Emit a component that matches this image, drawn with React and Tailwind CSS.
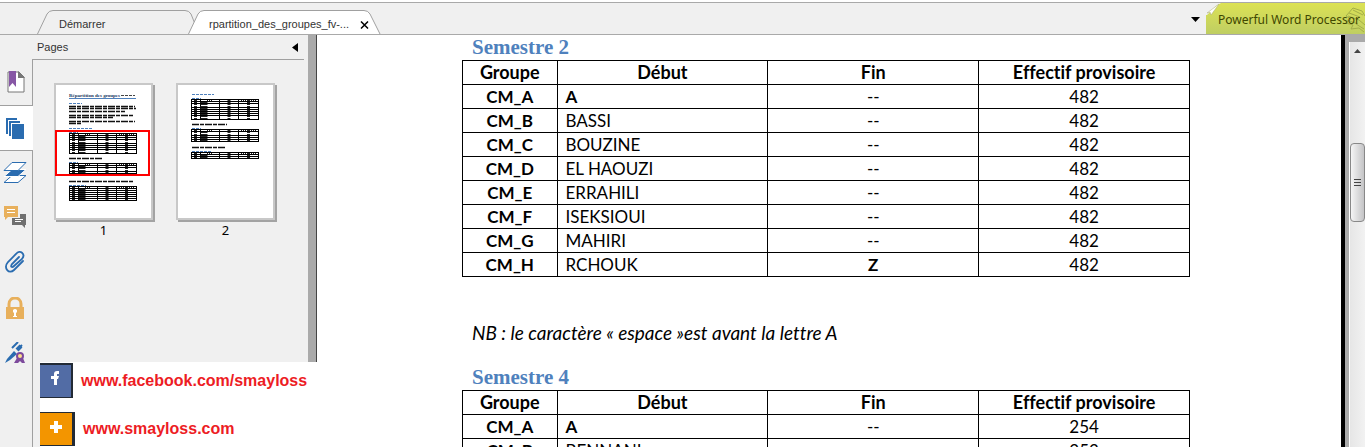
const semestre2 = [
  { groupe: "CM_A", debut: "A", fin: "--", effectif: 482 },
  { groupe: "CM_B", debut: "BASSI", fin: "--", effectif: 482 },
  { groupe: "CM_C", debut: "BOUZINE", fin: "--", effectif: 482 },
  { groupe: "CM_D", debut: "EL HAOUZI", fin: "--", effectif: 482 },
  { groupe: "CM_E", debut: "ERRAHILI", fin: "--", effectif: 482 },
  { groupe: "CM_F", debut: "ISEKSIOUI", fin: "--", effectif: 482 },
  { groupe: "CM_G", debut: "MAHIRI", fin: "--", effectif: 482 },
  { groupe: "CM_H", debut: "RCHOUK", fin: "Z", effectif: 482 },
];

const semestre4 = [
  { groupe: "CM_A", debut: "A", fin: "--", effectif: 254 },
  { groupe: "CM_B", debut: "BENNANI", fin: "--", effectif: 253 },
];

function TabBar() {
  return (
    <header className="flex h-[35px] shrink-0 flex-col border-b border-[#a9a9a9] bg-[#f0f0f0]">
      <div className="h-[3px] shrink-0 border-b border-[#a9a9a9] bg-white" />
      <div className="flex flex-1 items-end">
        <div className="relative ml-[37px] h-6 w-[344px] shrink-0 text-[11px] text-[#333]">
          <svg className="absolute inset-0" width="344" height="24" fill="#f0f0f0" stroke="#a0a0a0">
            <path d="M.5 24 10 4Q12 .5 16 .5H148Q152 .5 154 4L162 24" />
            <path d="M151.500 24 161 4Q163 .5 167 .5H327Q331 .5 333 4L343 24" fill="#fff" />
          </svg>
          <div className="relative flex h-full items-center">
            <button className="w-[150px] pt-1 pl-[22px] text-left">Démarrer</button>
            <button className="w-[165px] pt-1 pl-[22px] text-left">rpartition_des_groupes_fv-...</button>
            <button aria-label="Fermer" className="pt-1.5 pl-2">
              <svg width="9" height="8" stroke="#000" strokeWidth="1.500">
                <path d="M1 .5 8 7.500M8 .5 1 7.500" />
              </svg>
            </button>
          </div>
        </div>
        <button aria-label="Onglets" className="mr-1.5 ml-auto self-center pt-0.5">
          <svg width="9" height="5">
            <path d="M0 0H9L4.500 5Z" />
          </svg>
        </button>
        <a
          href="#word"
          className="relative flex h-[31px] w-[159px] shrink-0 items-center overflow-hidden bg-linear-to-b from-[#dce254] to-[#bfce62] pt-0.5 pl-3 font-['Noto_Sans',sans-serif] text-xs whitespace-nowrap text-[#3f4700]"
        >
          <svg className="absolute top-0 left-0" width="15" height="12">
            <path d="M0 0H15L10 3 1 12H0Z" fill="#f0f0f0" />
            <path d="M13 1 5 12 4 9 1 10Z" fill="#fff" stroke="#aaad75" strokeWidth=".5" />
          </svg>
          <svg className="absolute top-1 right-0" width="20" height="26" fill="none" stroke="#a3ae48">
            <path d="M1 9 8 1 17 4 20 9M4 6 15 10M3 9 14 13M2 13 13 17M8 3 18 8M1 9 6 12 1 16 8 18 6 22 14 21 19 25M14 13 20 18M11 17 19 22" />
          </svg>
          <span className="relative">Powerful Word Processor</span>
        </a>
      </div>
    </header>
  );
}

function SideNav() {
  return (
    <nav className="flex w-[33px] shrink-0 flex-col text-[#2a6cb0]">
      <div className="h-6 shrink-0" />
      <button aria-label="Signets" className="flex h-[46px] shrink-0 items-center justify-center border-r border-[#a0a0a0]">
        <svg width="18" height="22">
          <path d="M1 1H12L17 6V21H1Z" fill="#fff" stroke="#777" />
          <path d="M11 0 18 7H11Z" fill="#777" />
          <path d="M2 0H9V16L5.500 12 2 16Z" fill="#8757a5" />
        </svg>
      </button>
      <button aria-label="Pages" className="flex h-[46px] shrink-0 items-center justify-center border-y border-[#a0a0a0] bg-white pr-1">
        <svg width="18" height="21" fill="currentColor">
          <path d="M0 0H11V2H2V16H0ZM3 3H14V5H5V18H3ZM6 6H18V21H6Z" />
        </svg>
      </button>
      <div className="flex flex-1 flex-col items-center border-r border-[#a0a0a0] pr-0.5">
        <button aria-label="Calques" className="flex h-11 shrink-0 items-center">
          <svg width="24" height="22" stroke="currentColor">
            <path d="M1 20.500 9 13.500H23L15 20.500Z" fill="#fff" />
            <path d="M1 14.500 9 7.500H23L15 14.500Z" fill="currentColor" stroke="#fff" />
            <path d="M1 8.500 9 .5H23L15 8.500Z" fill="#fff" />
          </svg>
        </button>
        <button aria-label="Commentaires" className="flex h-11 shrink-0 items-center">
          <svg width="22" height="22">
            <path d="M0 0H14V11H4L1 14V11H0Z" fill="#e8b05c" />
            <path d="M3 3.500H11M3 6.500H11" stroke="#fff" />
            <path d="M16 8H22V19H21V22L18 19H8V12H16Z" fill="#707070" />
            <path d="M11 13.500H19M11 15.500H17" stroke="#fff" />
          </svg>
        </button>
        <button aria-label="Pièces jointes" className="flex h-[46px] shrink-0 items-center">
          <svg width="20" height="22" fill="none" stroke="currentColor" strokeWidth="1.800" strokeLinecap="round">
            <path d="M14 6 7 13C5 16 7 17 9 15L17 8C21 3 15-2 11 3L3 11C-2 17 4 24 9 19L18 10" />
          </svg>
        </button>
        <button aria-label="Sécurité" className="flex h-[46px] shrink-0 items-center">
          <svg width="18" height="22">
            <path d="M3 11V7C3-1 15-1 15 7V11" fill="none" stroke="#e8b05c" strokeWidth="3" />
            <path d="M0 10H18V22H0Z" fill="#e8b05c" />
            <path d="M7 13Q9 11 11 13V15L10 16V19H11V20H7V19H8V16L7 15Z" fill="#fff" />
          </svg>
        </button>
        <button aria-label="Signatures" className="flex h-11 shrink-0 items-center">
          <svg width="20" height="22">
            <path d="M7 6 13 0M13 7 17 3" stroke="currentColor" strokeWidth="2" />
            <path d="M12 8 16 4" stroke="currentColor" strokeWidth="4" />
            <path d="M0 21 2 17 9 9 12 12 5 18Z" fill="currentColor" />
            <path d="M12 16 9 21H13L15 19 17 21H20L18 16Z" fill="#7d4a9c" />
            <circle cx="15" cy="14" r="3" fill="#ffe08a" stroke="#7d4a9c" strokeWidth="2" />
          </svg>
        </button>
      </div>
    </nav>
  );
}

// Tiny ruled table inside a page thumbnail
function MiniTable({ y, rows, skip = [] }) {
  const lines = Array.from({ length: rows + 1 }, (_, i) => i);
  return (
    <g transform={`translate(13 ${y})`}>
      <g stroke="#000">
        {lines.filter((i) => !skip.includes(i)).map((i) => (
          <path key={i} d={`M0 ${i * 2 + 0.5}H68`} />
        ))}
        <path d={`M.5 0V${rows * 2 + 1}M9.500 0V${rows * 2 + 1}M28.500 0V${rows * 2 + 1}M47.500 0V${rows * 2 + 1}M67.500 0V${rows * 2 + 1}`} />
      </g>
      <g stroke="#222" strokeDasharray="1 1">
        <path d={`M4.500 1V${rows * 2}M38 1V${rows * 2}M57.500 1V${rows * 2}`} strokeWidth="3" />
        <path d={`M13 3V${rows * 2}`} strokeWidth="7" />
        <path d="M50 1.500H65M16 1.500H22" />
      </g>
    </g>
  );
}

function Thumbnail({ number, children }) {
  return (
    <button className="flex flex-col items-center text-[13px]/5 text-black">
      <span className="block border-2 border-[#c8c8c8] bg-white shadow-[2px_2px_0_#a3a3a3]">
        <svg className="overflow-visible" width="95" height="133">{children}</svg>
      </span>
      <span className="font-['Noto_Sans']">{number}</span>
    </button>
  );
}

function PagesPanel() {
  return (
    <aside className="flex w-[284px] shrink-0 flex-col">
      <div className="flex min-h-0 flex-1">
        <div className="flex min-w-0 flex-1 flex-col">
          <div className="mr-1 flex h-[25px] shrink-0 items-center justify-between border-b border-[#a0a0a0] pr-1.5 pl-1 text-[11px] text-[#333]">
            <h2>Pages</h2>
            <button aria-label="Réduire">
              <svg width="6" height="9">
                <path d="M6 0V9L0 4.500Z" />
              </svg>
            </button>
          </div>
          <div className="flex gap-[23px] pt-[23px] pl-[21px]">
            <Thumbnail number={1}>
              <text x="13" y="12" fontSize="5" fontWeight="bold" fontFamily="Liberation Serif" fill="#17365d">
                Répartition des groupes
              </text>
              <path d="M65 10.500H79" stroke="#444" strokeDasharray="3 1" />
              <path d="M13 13.500H80" stroke="#4f81bd" />
              <path d="M13 18.500H26M13 43.500H37M13 47.500H22M13 77.500H22M13 100.500H30" stroke="#4f81bd" strokeDasharray="3 1" />
              <path d="M13 21.500H79M13 23.500H80M13 26.500H69M13 30.500H78M13 32.500H57M13 36.500H79M13 38.500H26M13 73.500H47M13 96.500H77" stroke="#111" strokeWidth="1.500" strokeDasharray="7 1 4 1" />
              <MiniTable y={48} rows={10} skip={[4, 9]} />
              <MiniTable y={78} rows={6} skip={[3]} />
              <MiniTable y={101} rows={7} />
              <rect x="0" y="46" width="93" height="44" fill="none" stroke="#f00" strokeWidth="2" />
            </Thumbnail>
            <Thumbnail number={2}>
              <path d="M14 9.500H36M14 13.500H23M14 43.500H23M14 66.500H33" stroke="#4f81bd" strokeDasharray="3 1" />
              <path d="M14 39.500H49M14 62.500H48" stroke="#111" strokeWidth="1.500" strokeDasharray="7 1 4 1" />
              <MiniTable y={14} rows={10} skip={[3, 9]} />
              <MiniTable y={44} rows={6} skip={[2]} />
              <MiniTable y={67} rows={3} />
            </Thumbnail>
          </div>
        </div>
        <div className="w-[9px] border-r border-[#444] bg-[#aaa]" />
      </div>
      <div className="ml-[7px] flex h-[85px] shrink-0 flex-col gap-3.5 bg-white pt-px text-base font-bold whitespace-nowrap text-[#ed1c24]">
        <a href="#facebook" className="flex items-center gap-2">
          <span className="flex h-[35px] w-[33px] justify-center border-t-2 border-r-2 border-b border-[#222a35] bg-[#526ca5] pt-1.5">
            <svg width="9" height="14" fill="#fff">
              <path d="M3 14V8H0V5H3V3Q3 0 6 0H8V3H6V5H8L7 8H6V14Z" />
            </svg>
          </span>
          www.facebook.com/smayloss
        </a>
        <a href="#smayloss" className="flex items-center gap-2">
          <span className="flex h-[34px] w-[35px] justify-center border-t border-r-3 border-b border-[#222a35] bg-[#f39500] pt-2">
            <svg width="12" height="12" stroke="#fff" strokeWidth="4">
              <path d="M6 0V12M0 6H12" />
            </svg>
          </span>
          www.smayloss.com
        </a>
      </div>
    </aside>
  );
}

function GroupTable({ title, rows }) {
  return (
    <section>
      <h2 className="h-[25px] pl-2.5 font-['Liberation_Serif'] text-[21px]/6 font-bold text-[#4f81bd]">{title}</h2>
      <table className="w-full table-fixed border-collapse text-center text-[17px]/[23px]">
        <thead className="text-[18px]/[23px]">
          <tr className="h-6">
            <th className="w-[13%] border border-black">Groupe</th>
            <th className="w-[29%] border border-black">Début</th>
            <th className="w-[29%] border border-black">Fin</th>
            <th className="w-[29%] border border-black">Effectif provisoire</th>
          </tr>
        </thead>
        <tbody>
          {rows.map((row) => (
            <tr key={row.groupe} className="h-6">
              <th className="border border-black">{row.groupe}</th>
              <td className={`border border-black pl-2 text-left ${row.debut === "A" ? "font-bold" : ""}`}>{row.debut}</td>
              <td className={`border border-black ${row.fin === "Z" ? "font-bold" : ""}`}>{row.fin}</td>
              <td className="border border-black">{row.effectif}</td>
            </tr>
          ))}
        </tbody>
      </table>
    </section>
  );
}

function ScrollBar() {
  return (
    <div className="flex w-6 shrink-0 border-l-4 border-black">
      <div className="flex flex-1 bg-[#aaa] pt-[7px] pl-1">
        <div className="flex flex-1 flex-col border-l border-white bg-linear-to-r from-[#e6e6e6] to-[#f2f2f2]">
          <button aria-label="Défiler vers le haut" className="flex h-[101px] shrink-0 justify-center pt-[7px]">
            <svg width="7" height="4" fill="#444">
              <path d="M0 4 3.500 0 7 4Z" />
            </svg>
          </button>
          <div className="flex h-[79px] shrink-0 flex-col items-center justify-center gap-0.5 rounded-sm border border-[#888] bg-linear-to-r from-[#f5f5f5] to-[#c4c4c6]">
            <span className="h-px w-[7px] bg-[#444]" />
            <span className="h-px w-[7px] bg-[#444]" />
            <span className="h-px w-[7px] bg-[#444]" />
          </div>
        </div>
      </div>
    </div>
  );
}

function App() {
  return (
    <div className="flex h-screen flex-col overflow-hidden bg-[#f0f0f0] font-['Liberation_Sans',sans-serif]">
      <TabBar />
      <div className="flex min-h-0 flex-1">
        <SideNav />
        <PagesPanel />
        <main className="min-w-0 flex-1 overflow-hidden bg-white pr-[151px] pl-[145px] font-['Lato',sans-serif] text-black [font-variant-ligatures:none]">
          <GroupTable title="Semestre 2" rows={semestre2} />
          <p className="pt-11 pb-5 pl-2.5 text-[19px]/6 italic">NB : le caractère « espace »est avant la lettre A</p>
          <GroupTable title="Semestre 4" rows={semestre4} />
        </main>
        <ScrollBar />
      </div>
    </div>
  );
}

export default App;
